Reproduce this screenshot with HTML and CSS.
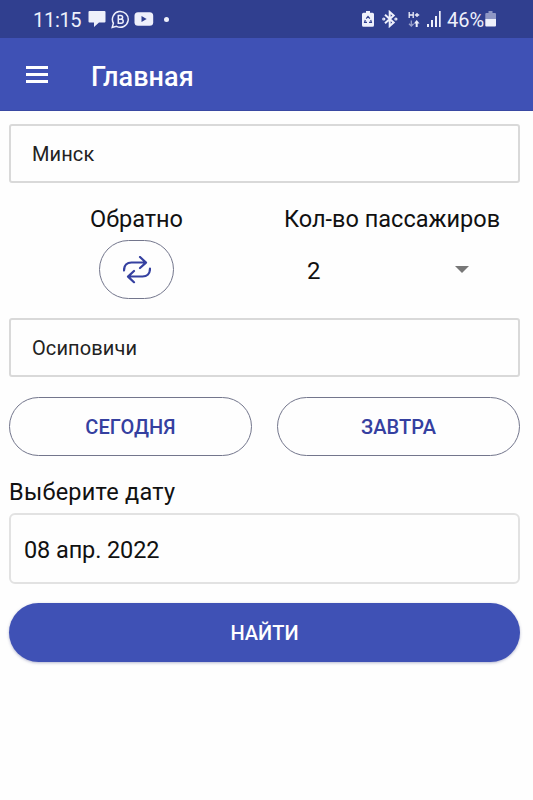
FILE: index.html
```html
<!DOCTYPE html>
<html lang="ru">
<head>
    <meta charset="UTF-8">
    <meta name="viewport" content="width=device-width, initial-scale=1.0">
    <title>Главная</title>
    <link rel="stylesheet" href="styles.css">
</head>
<body>
    <div class="status-bar">
        <div class="status-left">
            <span class="clock">11:15</span>
            <svg class="icon-chat" width="18" height="18" viewBox="0 0 18 18" fill="currentColor">
                <path d="M1.500 1h15q1 0 1 1v9.500q0 1-1 1H11L6 17v-4.500H1.500q-1 0-1-1V2q0-1 1-1z"/>
            </svg>
            <svg class="icon-business" width="19" height="19" viewBox="0 0 19 19" fill="none" stroke="currentColor" stroke-width="1.500">
                <path d="M1.200 17.500l1.200-4.300A7.900 7.900 0 1 1 5.500 16.300z"/>
                <path d="M7.300 5.400h2.400a1.900 1.900 0 0 1 0 3.800H7.300h2.900a2 2 0 0 1 0 4H7.300z"/>
            </svg>
            <svg class="icon-video" width="20" height="14" viewBox="0 0 20 14">
                <rect x="0.500" y="0.300" width="18.700" height="13.400" rx="3.500" fill="currentColor"/>
                <path d="M7.500 4v6l5.200-3z" fill="#303f8f"/>
            </svg>
            <span class="dot"></span>
        </div>
        <div class="status-right">
            <svg class="icon-saver" width="12" height="16" viewBox="0 0 12 16">
                <path d="M4 0h4v1.800h2.500Q12 1.800 12 3.300v11q0 1.500-1.500 1.500h-9Q0 15.800 0 14.300v-11Q0 1.800 1.500 1.800H4z" fill="currentColor"/>
                <path d="M4.200 7.700L6 5.400l1.800 2.300M8.700 9l.7 2.400H7M5 11.400H2.600l.7-2.400" fill="none" stroke="#303f8f" stroke-width="1.200"/>
            </svg>
            <svg class="icon-bluetooth" width="16" height="18" viewBox="0 0 16 18" fill="none" stroke="currentColor" stroke-width="2">
                <path d="M3 4.700l8.700 7.700L7.700 16V2l4 3.600L3 13.300"/>
                <circle cx="1.800" cy="9" r=".6"/>
                <circle cx="13.900" cy="9" r=".6"/>
            </svg>
            <svg class="icon-data" width="12" height="17" viewBox="0 0 12 17" fill="none" stroke="currentColor" stroke-width="1.300">
                <path d="M1.200 1v6M5.200 1v6M1.200 4h4M6.800 4h4.400M9 1.900v4.200"/>
                <path d="M3.300 9.500v5.500M1 12.700l2.300 2.300 2.300-2.300" opacity=".55"/>
                <path d="M8.700 16v-4.500" stroke-width="2"/>
                <path d="M5.900 12.500l2.800-3.400 2.800 3.400z" fill="currentColor" stroke="none"/>
            </svg>
            <svg class="icon-signal" width="14" height="16" viewBox="0 0 14 16" fill="currentColor">
                <path d="M0 13h2v3H0zM4 9h2v7H4zM8 5h2v11H8zM12 0h1.700v16H12z"/>
            </svg>
            <span class="percent">46%</span>
            <svg class="icon-battery" width="12" height="16" viewBox="0 0 12 16" fill="currentColor">
                <path d="M3.500 0h4v2H10q1 0 1 1v5H.3V3q0-1 1-1h2.200z" opacity=".5"/>
                <path d="M.3 8H11v6.500q0 1-1 1H1.300q-1 0-1-1z"/>
            </svg>
        </div>
    </div>

    <header class="app-bar">
        <button class="menu-button" aria-label="Меню">
            <span></span>
            <span></span>
            <span></span>
        </button>
        <h1>Главная</h1>
    </header>

    <main class="search-form">
        <div class="city-field">Минск</div>

        <div class="options">
            <div class="swap">
                <div class="label">Обратно</div>
                <button class="outline-button swap-button" aria-label="Обратно">
                    <svg width="28" height="28" viewBox="0 0 28 28" fill="none" stroke="currentColor" stroke-width="2.200" stroke-linecap="round" stroke-linejoin="round">
                        <path d="M1 14.500c0-5 3-8 7.500-8H22.500M17 1l6 5.600-6 5.400"/>
                        <path d="M27 12.500c0 5-3 8-7.500 8H5.500M11 15l-6 5.600 6 5.600"/>
                    </svg>
                </button>
            </div>
            <div class="passengers">
                <div class="label">Кол-во пассажиров</div>
                <div class="select">
                    <span>2</span>
                    <span class="caret"></span>
                </div>
            </div>
        </div>

        <div class="city-field">Осиповичи</div>

        <div class="day-buttons">
            <button class="outline-button">СЕГОДНЯ</button>
            <button class="outline-button">ЗАВТРА</button>
        </div>

        <div class="label date-label">Выберите дату</div>
        <div class="date-field">08 апр. 2022</div>

        <button class="submit-button">НАЙТИ</button>
    </main>
</body>
</html>
```
FILE: styles.css
```css
:root {
    --primary: #3f51b5;
    --primary-dark: #303f8f;
    --accent: #3540a0;
}

* {
    margin: 0;
    padding: 0;
    box-sizing: border-box;
    font-family: Roboto, sans-serif;
}

body {
    background: #fefefe;
    color: #111;
    height: 800px;
    overflow: hidden;
}

svg {
    display: block;
    flex: none;
}

.status-bar {
    display: flex;
    justify-content: space-between;
    height: 38px;
    padding: 0 36px 0 33px;
    background: var(--primary-dark);
    color: #eef0fb;
    font-size: 20px;
}

.status-left,
.status-right {
    display: flex;
    align-items: center;
}

.clock {
    width: 55px;
    padding-top: 1px;
    letter-spacing: -0.3px;
}

.icon-business {
    margin-left: 5px;
}

.icon-video {
    margin-left: 4px;
}

.dot {
    width: 5px;
    height: 5px;
    margin-left: 10px;
    border-radius: 50%;
    background: currentColor;
}

.icon-bluetooth {
    margin-left: 8px;
}

.icon-data {
    margin-left: 10px;
}

.icon-signal {
    margin-left: 7px;
}

.percent {
    width: 38px;
    margin-left: 6px;
    padding-top: 1px;
}

.app-bar {
    display: flex;
    align-items: center;
    height: 73px;
    padding-left: 26px;
    background: var(--primary);
    border-bottom: 1px solid #3949a3;
    color: white;
}

.menu-button {
    display: flex;
    flex-direction: column;
    gap: 4px;
    width: 22px;
    margin-right: 43px;
    background: none;
    border: none;
}

.menu-button span {
    height: 3px;
    background: white;
}

h1 {
    padding-top: 6px;
    font-size: 27px;
    font-weight: 500;
    line-height: 32px;
    letter-spacing: 0.1px;
}

.search-form {
    display: flex;
    flex-direction: column;
    padding: 13px 13px 0 9px;
}

.city-field {
    display: flex;
    align-items: center;
    height: 59px;
    padding: 1px 0 0 21px;
    border: 2px solid #d9d9d9;
    border-radius: 3px;
    font-size: 20px;
    letter-spacing: 0.1px;
    color: #222;
}

.label {
    font-size: 23.5px;
    line-height: 28px;
    white-space: nowrap;
}

.options {
    display: flex;
    height: 135px;
    padding-top: 22px;
}

.swap {
    display: flex;
    flex-direction: column;
    align-items: center;
    width: 255px;
}

.outline-button {
    display: flex;
    align-items: center;
    justify-content: center;
    height: 59px;
    border: 1px solid #73768c;
    border-radius: 30px;
    background: #fefefe;
    color: var(--accent);
    font-size: 20px;
    font-weight: 500;
    letter-spacing: 0.1px;
}

.swap-button {
    width: 75px;
    margin-top: 7px;
}

.passengers {
    padding-left: 20px;
}

.select {
    display: flex;
    align-items: center;
    justify-content: space-between;
    height: 59px;
    margin-top: 7px;
    padding: 3px 31px 0 23px;
    font-size: 24px;
}

.caret {
    margin-top: -3px;
    border-left: 7px solid transparent;
    border-right: 7px solid transparent;
    border-top: 7px solid #777;
}

.day-buttons {
    display: grid;
    grid-template-columns: 1fr 1fr;
    gap: 25px;
    margin-top: 20px;
}

.date-label {
    margin-top: 22px;
    letter-spacing: 0.25px;
}

.date-field {
    display: flex;
    align-items: center;
    height: 71px;
    margin-top: 7px;
    padding: 3px 0 0 13px;
    border: 2px solid #e2e2e2;
    border-radius: 6px;
    font-size: 23.5px;
    letter-spacing: -0.1px;
}

.submit-button {
    height: 59px;
    margin-top: 19px;
    border: none;
    border-radius: 30px;
    background: var(--primary);
    box-shadow: 0 1px 3px rgba(40, 50, 120, 0.35);
    color: white;
    font-size: 20px;
    font-weight: 500;
}
```
